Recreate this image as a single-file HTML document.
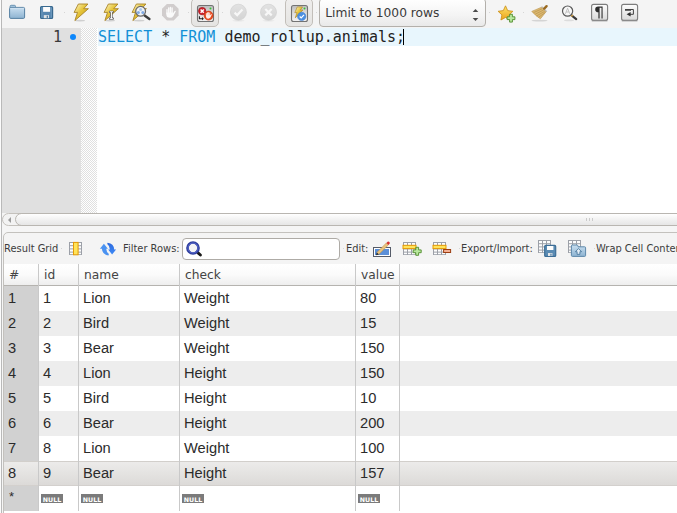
<!DOCTYPE html>
<html>
<head>
<meta charset="utf-8">
<title>Query</title>
<style>
html,body{margin:0;padding:0;}
body{width:677px;height:513px;overflow:hidden;position:relative;background:#f5f5f5;font-family:"DejaVu Sans","Liberation Sans",sans-serif;color:#333;}
.abs{position:absolute;}
#leftedge{left:0;top:0;width:1px;height:513px;background:#fbfbfb;}
#leftline{left:1px;top:0;width:1px;height:513px;background:#b9b9b9;}
#toolbar{left:2px;top:0;width:675px;height:28px;background:#f4f4f4;}
#toolbar svg{position:absolute;overflow:visible;}
.tbtn{position:absolute;top:-2px;height:29px;width:28px;border:1px solid #c2beb9;border-radius:5px;background:linear-gradient(#efeeed,#e5e4e2);box-sizing:border-box;}
#limit{position:absolute;left:317px;top:-2px;width:167px;height:29px;box-sizing:border-box;border:1px solid #b3b0ab;border-radius:4px;background:linear-gradient(#ffffff,#f4f4f4 60%,#e9e9e9);font-size:12.25px;line-height:29px;padding-left:5.3px;color:#3a3a3a;white-space:nowrap;}
/* editor */
#editor{left:2px;top:28px;width:675px;height:185px;background:#fff;}
#gutter{left:0;top:0;width:79px;height:185px;background:#e0e0e0;}
#fold{left:79px;top:0;width:16px;height:185px;background:#f0f0f0;background-image:linear-gradient(45deg,#e0e0e0 25%,transparent 25%,transparent 75%,#e0e0e0 75%),linear-gradient(45deg,#e0e0e0 25%,#fff 25%,#fff 75%,#e0e0e0 75%);background-size:2px 2px;background-position:0 0,1px 1px;}
#curline{left:96px;top:0;width:579px;height:18px;background:#e8f6fd;}
#lnum{left:0;top:0;width:60px;height:18px;text-align:right;font:15px/18px "DejaVu Sans Mono","Liberation Mono",monospace;color:#3a3a3a;}
#dot{left:68px;top:6px;width:6px;height:6px;border-radius:50%;background:#0b86fb;}
#code{left:96px;top:0;height:18px;font:15px/18px "DejaVu Sans Mono","Liberation Mono",monospace;color:#222;white-space:pre;}
#code .k{color:#1290d6;}
#caret{left:403px;top:29px;width:1px;height:16px;background:#000;}
/* hscroll */
#hscroll{left:2px;top:213px;width:675px;height:13px;background:#f5f5f5;}
#hsb{left:0;top:0;width:690px;height:13px;border:1px solid #c4c1bc;border-radius:7px;background:#f3f3f3;box-sizing:border-box;}
#hthumb{left:13px;top:0;width:680px;height:13px;border:1px solid #b9b6b1;border-radius:7px;background:linear-gradient(#ffffff,#f3f3f3 45%,#e6e6e6);box-sizing:border-box;}
#harrow{left:5.6px;top:3.5px;width:0;height:0;border-top:3px solid transparent;border-bottom:3px solid transparent;border-right:3.6px solid #9c9c9c;}
#hgrip{left:584px;top:5px;width:7px;height:3px;background:linear-gradient(90deg,#cbcbcb 1px,transparent 1px);background-size:3px 3px;}
/* result panel */
#panel{left:3px;top:232px;width:690px;height:300px;border:1px solid #c3c1bd;border-radius:5px 0 0 0;background:#f4f4f4;box-sizing:border-box;}
#rtb{left:0;top:0;width:690px;height:31px;font-size:9.9px;color:#3c3c3c;}
#rtb span{position:absolute;top:0;line-height:31px;white-space:nowrap;}
#rtb svg{position:absolute;overflow:visible;}
#filter{left:178px;top:5px;width:158px;height:22px;border:1px solid #aeaba6;border-radius:4px;background:#fff;box-sizing:border-box;}
/* grid */
#grid{left:4px;top:264px;width:673px;height:249px;background:#fff;}
#ghead{left:0;top:0;width:673px;height:21px;background:linear-gradient(#ffffff,#fbfbfb 50%,#eeeeee);border-bottom:1px solid #b5b3af;font-size:12.25px;color:#444;}
#ghead span{position:absolute;top:1px;line-height:21px;}
.vl{position:absolute;top:0;width:1px;background:#c9c9c9;}
.row{position:absolute;left:0;width:673px;height:25px;font:14.67px/24px "Liberation Sans",sans-serif;color:#2b2b2b;}
.row.alt{background:linear-gradient(90deg,rgba(0,0,0,0) 34px,#ededed 34px);}
.row.sel{background:linear-gradient(#d2cfcb 0,#d2cfcb 1px,#ecebea 1px,#e4e3e1 50%,#dcdad8 24px,#d3d0cd 24px);}
.row span{position:absolute;top:0;white-space:nowrap;}
.rn{left:0;top:22px;width:34px;height:225px;background:#d1d1d1;}
.null{position:absolute;top:8px;height:9px;width:22px;background:#7b7b7b;color:#fff;font:bold 6.3px/11px "DejaVu Sans","Liberation Sans",sans-serif;text-align:center;overflow:hidden;}
</style>
</head>
<body>
<div id="leftedge" class="abs"></div>
<div id="toolbar" class="abs">
  <div class="tbtn" style="left:189px"></div>
  <div class="tbtn" style="left:283px"></div>
  <div id="limit">Limit to 1000 rows</div>
</div>
<div id="leftline" class="abs"></div>
<svg id="tbicons" class="abs" style="left:0;top:0" width="677" height="28" viewBox="0 0 677 28">
  <defs>
    <linearGradient id="gFolder" x1="0" y1="0" x2="0" y2="1"><stop offset="0" stop-color="#c9dff0"/><stop offset="1" stop-color="#8db3d1"/></linearGradient>
    <linearGradient id="gBolt" x1="0" y1="0" x2="1" y2="1"><stop offset="0" stop-color="#fdf8cf"/><stop offset="0.45" stop-color="#e6c43a"/><stop offset="0.6" stop-color="#dcb92e"/><stop offset="1" stop-color="#f8ecac"/></linearGradient>
    <linearGradient id="gStar" x1="0" y1="0" x2="0" y2="1"><stop offset="0" stop-color="#fbe36a"/><stop offset="1" stop-color="#eca21a"/></linearGradient>
    <linearGradient id="gBtn" x1="0" y1="0" x2="0" y2="1"><stop offset="0" stop-color="#fdfdfd"/><stop offset="1" stop-color="#d9d9d9"/></linearGradient>
    <linearGradient id="gDis" x1="0" y1="0" x2="0" y2="1"><stop offset="0" stop-color="#e2e2e2"/><stop offset="1" stop-color="#d4d4d4"/></linearGradient>
    <linearGradient id="gInner" x1="0" y1="0" x2="0" y2="1"><stop offset="0" stop-color="#bcbcbc"/><stop offset="0.5" stop-color="#dedede"/><stop offset="1" stop-color="#f3f3f3"/></linearGradient>
    <path id="bolt" d="M78.4 4 L87.9 4 L83.7 8.7 L88.4 8.7 L74.9 20.6 L77.5 12.4 L74.1 12.4 Z"/>
  </defs>
  <rect x="64.0" y="12" width="1" height="1" fill="#d6d6d6"/><rect x="188.0" y="12" width="1" height="1" fill="#d6d6d6"/><rect x="222.0" y="12" width="1" height="1" fill="#d6d6d6"/><rect x="316.0" y="12" width="1" height="1" fill="#d6d6d6"/><rect x="489.0" y="12" width="1" height="1" fill="#d6d6d6"/><rect x="523.0" y="12" width="1" height="1" fill="#d6d6d6"/>
  <!-- folder -->
  <path d="M10.1 8 L10.1 6.4 Q10.1 5.3 11.2 5.3 L14.4 5.3 Q15.5 5.3 15.5 6.4 L15.5 8 Z" fill="#a9c9e2" stroke="#5f8aac" stroke-width="0.9"/>
  <rect x="9.6" y="7.4" width="15" height="11" rx="1.2" fill="url(#gFolder)" stroke="#5680a3" stroke-width="1"/>
  <path d="M10.4 8.3 L23.8 8.3" stroke="#d7e7f4" stroke-width="0.7"/>
  <!-- save -->
  <rect x="40.6" y="6.5" width="12" height="12" rx="1" fill="#5686af" stroke="#39698f" stroke-width="1.2"/>
  <path d="M41.9 7.6 L41.9 17.6 M51.3 7.6 L51.3 17.6" stroke="#7ba3c6" stroke-width="0.7"/>
  <rect x="43.1" y="7" width="7" height="4.8" fill="#fdfdfd"/>
  <rect x="43.8" y="15.1" width="5.2" height="3.1" fill="#dfe3e6"/>
  <rect x="46.7" y="15.7" width="1.2" height="2.2" fill="#44739a"/>
  <!-- bolt 1 -->
  <ellipse cx="80" cy="20.6" rx="5" ry="0.9" fill="#cfcfcf"/>
  <use href="#bolt" fill="url(#gBolt)" stroke="#a98327" stroke-width="0.9" stroke-linejoin="round"/>
  <!-- bolt 2 with I-beam -->
  <ellipse cx="110" cy="20.6" rx="5" ry="0.9" fill="#cfcfcf"/>
  <use href="#bolt" x="30" fill="url(#gBolt)" stroke="#a98327" stroke-width="0.9" stroke-linejoin="round"/>
  <path d="M110 11.8 L112.8 11.8 M111.4 11.8 L111.4 18.7 M110 18.7 L112.8 18.7" stroke="#4a4a4a" stroke-width="2.3" stroke-linecap="round" fill="none"/>
  <path d="M110 11.8 L112.8 11.8 M111.4 11.8 L111.4 18.7 M110 18.7 L112.8 18.7" stroke="#ffffff" stroke-width="1.1" stroke-linecap="round" fill="none"/>
  <!-- bolt 3 with magnifier -->
  <ellipse cx="139" cy="20.6" rx="5.5" ry="0.9" fill="#cfcfcf"/>
  <use href="#bolt" x="58" fill="url(#gBolt)" stroke="#a98327" stroke-width="0.9" stroke-linejoin="round"/>
  <path d="M144.6 15.6 L149.4 19" stroke="#3c3c3c" stroke-width="2.4" stroke-linecap="round"/>
  <circle cx="140.6" cy="11.3" r="4.9" fill="#f1f3f6" stroke="#6a6a6a" stroke-width="1.3"/>
  <circle cx="140.6" cy="9.4" r="1.5" fill="#a9c8ee"/>
  <circle cx="138.4" cy="12.6" r="1.5" fill="#7fa9e3"/>
  <circle cx="142.8" cy="12.6" r="1.5" fill="#7fa9e3"/>
  <!-- stop (disabled) -->
  <path d="M166.9 3.9 L173.7 3.9 L178.6 8.8 L178.6 15.6 L173.7 20.5 L166.9 20.5 L162 15.6 L162 8.8 Z" fill="#d1cdcd"/>
  <path d="M167 9.6 L167 13.5 M168.7 7.9 L168.7 13 M170.4 7.4 L170.4 13 M172.1 7.9 L172.1 13" stroke="#fafafa" stroke-width="1.35" stroke-linecap="round" fill="none"/>
  <path d="M166.3 12.4 L172.8 12.4 L172.8 13.4 L174.6 11 Q175.4 10.3 176 11.1 L173.4 15.9 Q172.2 17.8 170 17.8 Q166.3 17.8 166.3 14.2 Z" fill="#fafafa"/>
  <!-- toggle 1 inner icon -->
  <rect x="197.5" y="5.5" width="16" height="16" rx="2" fill="url(#gInner)" stroke="#737373" stroke-width="1.1"/>
  <circle cx="210.5" cy="8.4" r="1" fill="#35c435"/>
  <path d="M199.4 16.2 L199.4 18.7 L202.4 18.7" stroke="#222" stroke-width="1.1" fill="none"/><path d="M202 17.1 L203.9 18.7 L202 20.3 Z" fill="#222"/>
  <circle cx="202.2" cy="11.1" r="3.7" fill="#cf1f2a" stroke="#9c121a" stroke-width="0.7"/>
  <path d="M200.6 9.5 L203.8 12.7 M203.8 9.5 L200.6 12.7" stroke="#fff" stroke-width="1.5"/>
  <circle cx="208.6" cy="15.6" r="4.5" fill="#e8491d" stroke="#c5330e" stroke-width="0.6"/>
  <path d="M206.4 13.6 L206.4 16 M207.5 12.8 L207.5 16 M208.6 12.6 L208.6 16 M209.7 13 L209.7 16" stroke="#fdeee8" stroke-width="0.95" stroke-linecap="round" fill="none"/><path d="M206 15.2 L210.2 15.2 L211.4 14 L211.9 14.6 L210.4 17.6 Q209.6 18.7 208.2 18.7 Q206 18.7 206 16.4 Z" fill="#fdeee8"/>
  <!-- check / x disabled -->
  <ellipse cx="238.4" cy="20.7" rx="6" ry="0.8" fill="#e6e6e6"/>
  <circle cx="238.4" cy="12.2" r="8" fill="url(#gDis)" stroke="#cdcdcd" stroke-width="0.6"/>
  <path d="M234.6 12.6 L237.2 15.1 L242.4 9.6" stroke="#f7f7f7" stroke-width="2.2" fill="none"/>
  <ellipse cx="268.5" cy="20.7" rx="6" ry="0.8" fill="#e6e6e6"/>
  <circle cx="268.5" cy="12.2" r="8" fill="url(#gDis)" stroke="#cdcdcd" stroke-width="0.6"/>
  <path d="M265.3 9 L271.7 15.4 M271.7 9 L265.3 15.4" stroke="#f7f7f7" stroke-width="2.2" fill="none"/>
  <!-- toggle 2 inner icon -->
  <rect x="291.5" y="5.5" width="16" height="16" rx="2" fill="url(#gInner)" stroke="#737373" stroke-width="1.1"/>
  <path d="M297.3 6.9 L302.6 6.9 L300.3 10 L303 10 L295.3 17.8 L297 12.6 L294.8 12.6 Z" fill="url(#gBolt)" stroke="#b48d2c" stroke-width="0.7" stroke-linejoin="round"/>
  <circle cx="304.5" cy="8.4" r="1" fill="#35c435"/>
  <circle cx="301.7" cy="16.4" r="4.2" fill="#4b8fe2" stroke="#3a78c8" stroke-width="0.5"/>
  <path d="M299.7 16.5 L301.2 18 L304 14.9" stroke="#fff" stroke-width="1.2" fill="none"/>
  <!-- combobox arrows -->
  <path d="M472.7 12 L475.5 8.9 L478.3 12 Z" fill="#4a4a4a"/>
  <path d="M472.7 18 L475.5 21.1 L478.3 18 Z" fill="#4a4a4a"/>
  <!-- star + -->
  <path d="M505.5 5.8 L507.7 10.6 L512.9 11.3 L509.1 14.9 L510.1 20 L505.5 17.5 L500.9 20 L501.9 14.9 L498.1 11.3 L503.3 10.6 Z" fill="url(#gStar)" stroke="#c98c14" stroke-width="0.8" stroke-linejoin="round"/>
  <path d="M509.6 14.3 L512.4 14.3 L512.4 16.8 L514.9 16.8 L514.9 19.6 L512.4 19.6 L512.4 22.1 L509.6 22.1 L509.6 19.6 L507.1 19.6 L507.1 16.8 L509.6 16.8 Z" fill="#b9e89e" stroke="#4f8b2b" stroke-width="0.9" stroke-linejoin="round"/>
  <!-- broom -->
  <ellipse cx="539.5" cy="20.7" rx="8" ry="0.9" fill="#d4d4d4"/>
  <path d="M531.8 11.4 L541.6 7.2 L546 11.8 L540.4 18.8 Q536 16.2 531.8 11.4 Z" fill="#dcb971" stroke="#b88f45" stroke-width="0.6" stroke-linejoin="round"/>
  <path d="M533.6 12.6 L542.4 8.6 M535.2 14.2 L543.6 10 M536.8 15.8 L544.6 11.4 M538.6 17.2 L545.2 12.6" stroke="#b48d48" stroke-width="0.6"/>
  <path d="M541.2 6.9 L546.4 12.1 L547.2 11.2 L542.2 6.2 Z" fill="#b9b6ae"/>
  <path d="M544.2 8.6 L546.6 6.2" stroke="#9a6a20" stroke-width="2.4" stroke-linecap="round"/>
  <!-- magnifier A -->
  <ellipse cx="569" cy="20.4" rx="5" ry="0.8" fill="#dcdcdc"/>
  <path d="M571.6 15.4 L576.2 19.1" stroke="#3a3a3a" stroke-width="2.2" stroke-linecap="round"/>
  <path d="M571.2 15 L572.6 16.2" stroke="#d9a441" stroke-width="2.2"/>
  <circle cx="567.6" cy="11.1" r="5.1" fill="#f7f7f7" stroke="#5a5a5a" stroke-width="1.2"/>
  <path d="M565.4 13.8 L567.6 8.2 L569.8 13.8 M566.3 12 L568.9 12" stroke="#b4b4b4" stroke-width="0.8" fill="none"/>
  <!-- pilcrow button -->
  <rect x="591.6" y="4.4" width="16" height="16" rx="2" fill="url(#gBtn)" stroke="#7c7c7c" stroke-width="1.1"/>
  <path d="M591.8 21.2 L607.4 21.2" stroke="#b9b9b9" stroke-width="0.8"/>
  <path d="M598.2 6.6 L602.6 6.6 L602.6 18.6 L601.5 18.6 L601.5 7.7 L599.6 7.7 L599.6 18.6 L598.4 18.6 L598.4 12.2 Q595.2 12.2 595.2 9.4 Q595.2 6.6 598.2 6.6 Z" fill="#2e2e2e"/>
  <!-- wrap button -->
  <rect x="621.6" y="4.4" width="16" height="16" rx="2" fill="url(#gBtn)" stroke="#7c7c7c" stroke-width="1.1"/>
  <path d="M621.8 21.2 L637.4 21.2" stroke="#b9b9b9" stroke-width="0.8"/>
  <path d="M625 9.9 L631 9.9" stroke="#2e2e2e" stroke-width="1.6"/>
  <path d="M631 9.5 L633.4 9.5 L633.4 14.3 L629.4 14.3" stroke="#2e2e2e" stroke-width="0.9" fill="none"/>
  <path d="M626.6 14.3 L630.6 12 L630.6 16.6 Z" fill="#2e2e2e"/>
</svg>

<div id="editor" class="abs">
  <div id="gutter" class="abs"></div>
  <div id="fold" class="abs"></div>
  <div id="curline" class="abs"></div>
  <div id="lnum" class="abs">1</div>
  <div id="dot" class="abs"></div>
  <div id="code" class="abs"><span class="k">SELECT</span> * <span class="k">FROM</span> demo_rollup.animals;</div>
</div>
<div id="caret" class="abs"></div>

<div id="hscroll" class="abs">
  <div id="hsb" class="abs"></div>
  <div id="hthumb" class="abs"></div>
  <div id="harrow" class="abs"></div>
  <div id="hgrip" class="abs"></div>
</div>

<div id="panel" class="abs">
  <div id="rtb" class="abs">
    <span style="left:0px">Result Grid</span>
    <span style="left:119px">Filter Rows:</span>
    <div id="filter" class="abs"></div>
    <span style="left:342px">Edit:</span>
    <span style="left:457px">Export/Import:</span>
    <span style="left:592px">Wrap Cell Content:</span>
  </div>
</div>

<svg id="rticons" class="abs" style="left:0;top:233px" width="677" height="31" viewBox="0 233 677 31">
  <defs>
    <linearGradient id="gRef2" x1="0" y1="0" x2="0" y2="1"><stop offset="0" stop-color="#2c69dd"/><stop offset="1" stop-color="#3f8af6"/></linearGradient>
    <g id="tgrid">
      <rect x="0" y="0" width="13" height="13" fill="#9ca0a8"/>
      <rect x="1" y="1" width="3" height="2.2" fill="#fdfdfd"/><rect x="5" y="1" width="3" height="2.2" fill="#fdfdfd"/><rect x="9" y="1" width="3" height="2.2" fill="#fdfdfd"/>
      <rect x="1" y="4.2" width="3" height="2.2" fill="#fdfdfd"/><rect x="5" y="4.2" width="3" height="2.2" fill="#fdfdfd"/><rect x="9" y="4.2" width="3" height="2.2" fill="#fdfdfd"/>
      <rect x="1" y="7.4" width="3" height="2.2" fill="#fdfdfd"/><rect x="5" y="7.4" width="3" height="2.2" fill="#fdfdfd"/><rect x="9" y="7.4" width="3" height="2.2" fill="#fdfdfd"/>
      <rect x="1" y="10.6" width="3" height="1.6" fill="#fdfdfd"/><rect x="5" y="10.6" width="3" height="1.6" fill="#fdfdfd"/><rect x="9" y="10.6" width="3" height="1.6" fill="#fdfdfd"/>
    </g>
  </defs>
  <rect x="61.0" y="248" width="1" height="1" fill="#d6d6d6"/><rect x="343.0" y="248" width="1" height="1" fill="#d6d6d6"/><rect x="459.0" y="248" width="1" height="1" fill="#d6d6d6"/><rect x="594.0" y="248" width="1" height="1" fill="#d6d6d6"/>
  <!-- result grid icon -->
  <use href="#tgrid" x="69" y="242"/>
  <rect x="73.5" y="242.4" width="4.6" height="12.4" fill="#ffe45a" stroke="#e59a06" stroke-width="1"/>
  <!-- refresh -->
  <path d="M99.9 248.7 L103.9 243.8 L107.9 248.7 L106.2 248.7 Q106.5 252.4 108.9 254.1 L108.5 255.4 Q102.3 254.8 101.9 248.7 Z" fill="#4a92f1"/>
  <path d="M116.1 249.5 L112.1 254.4 L108.2 249.5 L109.9 249.5 Q109.6 245.6 107.2 244 L107.6 242.7 Q113.8 243.3 114.2 249.5 Z" fill="url(#gRef2)"/>
  <!-- search icon in filter -->
  <path d="M197.8 252.6 L200.4 255" stroke="#1a1a1a" stroke-width="2.9" stroke-linecap="round"/>
  <circle cx="193" cy="248" r="5.5" fill="#f3f3f5" stroke="#2f3f9e" stroke-width="2.7"/>
  <circle cx="193" cy="248" r="5" fill="none" stroke="#5a6bd0" stroke-width="0.9"/>
  <!-- edit icon -->
  <rect x="373.5" y="247.5" width="17" height="9" fill="#ffffff" stroke="#555b68" stroke-width="1"/>
  <rect x="375" y="249" width="14" height="6" fill="#5b8fd8"/>
  <path d="M376.8 252.6 L386.4 242.9 L388.4 244.9 L378.8 254.4 Z" fill="#e9c27c" stroke="#b98a3c" stroke-width="0.5"/>
  <path d="M386.4 242.9 L387.6 241.7 Q388.6 241 389.4 242 Q390.2 243 389.6 243.8 L388.4 244.9 Z" fill="#d9322e"/>
  <path d="M376.8 252.6 L378.8 254.4 L376 255.2 Z" fill="#2a2a2a"/>
  <!-- add row -->
  <use href="#tgrid" x="403" y="242"/>
  <rect x="403" y="245.3" width="13" height="3.3" fill="#ffe45a" stroke="#e59a06" stroke-width="1"/>
  <path d="M415.8 247.3 L418.6 247.3 L418.6 249.9 L421.2 249.9 L421.2 252.7 L418.6 252.7 L418.6 255.3 L415.8 255.3 L415.8 252.7 L413.2 252.7 L413.2 249.9 L415.8 249.9 Z" fill="#b9e89e" stroke="#4f8b2b" stroke-width="0.9" stroke-linejoin="round"/>
  <!-- delete row -->
  <use href="#tgrid" x="433" y="242"/>
  <rect x="433" y="245.3" width="13" height="3.3" fill="#ffe45a" stroke="#e59a06" stroke-width="1"/>
  <rect x="443.6" y="249.5" width="7" height="3" fill="#f4b093" stroke="#9c3e12" stroke-width="1"/>
  <!-- export -->
  <use href="#tgrid" x="538" y="240"/>
  <rect x="544.7" y="245.4" width="11" height="11" rx="1" fill="#5a8bb3" stroke="#3c6e97" stroke-width="1.2"/>
  <rect x="547" y="246" width="6.4" height="4" fill="#fdfdfd"/>
  <rect x="548" y="253" width="4.4" height="3" fill="#e4e7ea"/>
  <rect x="550.4" y="253.6" width="1.1" height="2.2" fill="#3c6e97"/>
  <!-- import -->
  <use href="#tgrid" x="568" y="240"/>
  <path d="M571.4 255.4 L571.4 246 Q571.4 245 572.4 245 L577 245 Q577.8 245 578 246 L578.1 246.8 L584.6 246.8 Q585.6 246.8 585.6 247.8 L585.6 255.4 Q585.6 256.4 584.6 256.4 L572.4 256.4 Q571.4 256.4 571.4 255.4 Z" fill="url(#gFolder)" stroke="#5d88aa" stroke-width="1"/>
  <path d="M578.5 248.6 L581.6 251.7 L579.9 251.7 L579.9 254.3 L577.1 254.3 L577.1 251.7 L575.4 251.7 Z" fill="#e6f0f8" stroke="#3f6f96" stroke-width="0.8" stroke-linejoin="round"/>
</svg>

<div id="grid" class="abs">
  <div class="rn abs"></div>
  <div class="row" style="top:22px"><span style="left:4px">1</span><span style="left:39px">1</span><span style="left:79px">Lion</span><span style="left:180px">Weight</span><span style="left:356px">80</span></div>
  <div class="row alt" style="top:47px"><span style="left:4px">2</span><span style="left:39px">2</span><span style="left:79px">Bird</span><span style="left:180px">Weight</span><span style="left:356px">15</span></div>
  <div class="row" style="top:72px"><span style="left:4px">3</span><span style="left:39px">3</span><span style="left:79px">Bear</span><span style="left:180px">Weight</span><span style="left:356px">150</span></div>
  <div class="row alt" style="top:97px"><span style="left:4px">4</span><span style="left:39px">4</span><span style="left:79px">Lion</span><span style="left:180px">Height</span><span style="left:356px">150</span></div>
  <div class="row" style="top:122px"><span style="left:4px">5</span><span style="left:39px">5</span><span style="left:79px">Bird</span><span style="left:180px">Height</span><span style="left:356px">10</span></div>
  <div class="row alt" style="top:147px"><span style="left:4px">6</span><span style="left:39px">6</span><span style="left:79px">Bear</span><span style="left:180px">Height</span><span style="left:356px">200</span></div>
  <div class="row" style="top:172px"><span style="left:4px">7</span><span style="left:39px">8</span><span style="left:79px">Lion</span><span style="left:180px">Weight</span><span style="left:356px">100</span></div>
  <div class="row sel" style="top:197px"><span style="left:4px">8</span><span style="left:39px">9</span><span style="left:79px">Bear</span><span style="left:180px">Height</span><span style="left:356px">157</span></div>
  <div class="row" style="top:222px"><span style="left:5px;top:-1px;font-size:13px">*</span><b class="null" style="left:37px">NULL</b><b class="null" style="left:77px">NULL</b><b class="null" style="left:178px">NULL</b><b class="null" style="left:354px">NULL</b></div>
  <div id="ghead" class="abs"><span style="left:5px">#</span><span style="left:40px">id</span><span style="left:80px">name</span><span style="left:181px">check</span><span style="left:357px">value</span></div>
  <div class="vl" style="left:34px;height:247px"></div>
  <div class="vl" style="left:74px;height:247px"></div>
  <div class="vl" style="left:175px;height:247px"></div>
  <div class="vl" style="left:351px;height:247px"></div>
  <div class="vl" style="left:395px;height:247px"></div>
</div>
</body>
</html>
